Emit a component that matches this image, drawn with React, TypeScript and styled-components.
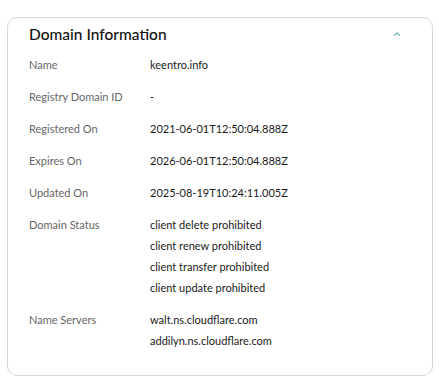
import React from 'react';
import styled, { createGlobalStyle } from 'styled-components';

const GlobalStyle = createGlobalStyle`
  body {
    margin: 0;
    background-color: #fff;
    font-family: Lato, 'Liberation Sans', sans-serif;
  }
`;

const Page = styled.div`
  padding: 17px 6px 6px 7px;
`;

const Card = styled.section`
  border: 1px solid #d6d6d6;
  border-radius: 10px;
  padding: 0 21px 17px 21px;
  height: 359px;
  box-sizing: border-box;
`;

const Header = styled.div`
  display: flex;
  align-items: center;
  justify-content: space-between;
  height: 31px;
`;

const Title = styled.h2`
  margin: 0;
  font-size: 15.5px;
  font-weight: 500;
  color: #111;
  letter-spacing: 0;
`;

const Toggle = styled.button`
  border: none;
  background: none;
  padding: 0;
  margin-right: 9px;
  display: flex;
  cursor: pointer;
`;

const List = styled.dl`
  margin: 5px 0 0 0;
  display: grid;
  grid-template-columns: 121px 1fr;
  row-gap: 11px;
`;

const Label = styled.dt`
  font-size: 11px;
  line-height: 21px;
  color: #666;
`;

const Values = styled.dd`
  margin: 0;
  display: flex;
  flex-direction: column;
`;

const Value = styled.span`
  font-size: 11px;
  line-height: 21px;
  color: #1a1a1a;
`;

const rows: { label: string; values: string[] }[] = [
  { label: 'Name', values: ['keentro.info'] },
  { label: 'Registry Domain ID', values: ['-'] },
  { label: 'Registered On', values: ['2021-06-01T12:50:04.888Z'] },
  { label: 'Expires On', values: ['2026-06-01T12:50:04.888Z'] },
  { label: 'Updated On', values: ['2025-08-19T10:24:11.005Z'] },
  {
    label: 'Domain Status',
    values: [
      'client delete prohibited',
      'client renew prohibited',
      'client transfer prohibited',
      'client update prohibited',
    ],
  },
  { label: 'Name Servers', values: ['walt.ns.cloudflare.com', 'addilyn.ns.cloudflare.com'] },
];

export default function App() {
  return (
    <Page>
      <GlobalStyle />
      <Card>
        <Header>
          <Title>Domain Information</Title>
          <Toggle aria-label="Collapse">
            <svg width="10" height="6" viewBox="0 0 10 6">
              <path d="M2 4.6 L5 1.8 L8 4.6" fill="none" stroke="#1b8c94" strokeWidth="1" />
            </svg>
          </Toggle>
        </Header>
        <List>
          {rows.map(row => (
            <React.Fragment key={row.label}>
              <Label>{row.label}</Label>
              <Values>
                {row.values.map(v => (
                  <Value key={v}>{v}</Value>
                ))}
              </Values>
            </React.Fragment>
          ))}
        </List>
      </Card>
    </Page>
  );
}
